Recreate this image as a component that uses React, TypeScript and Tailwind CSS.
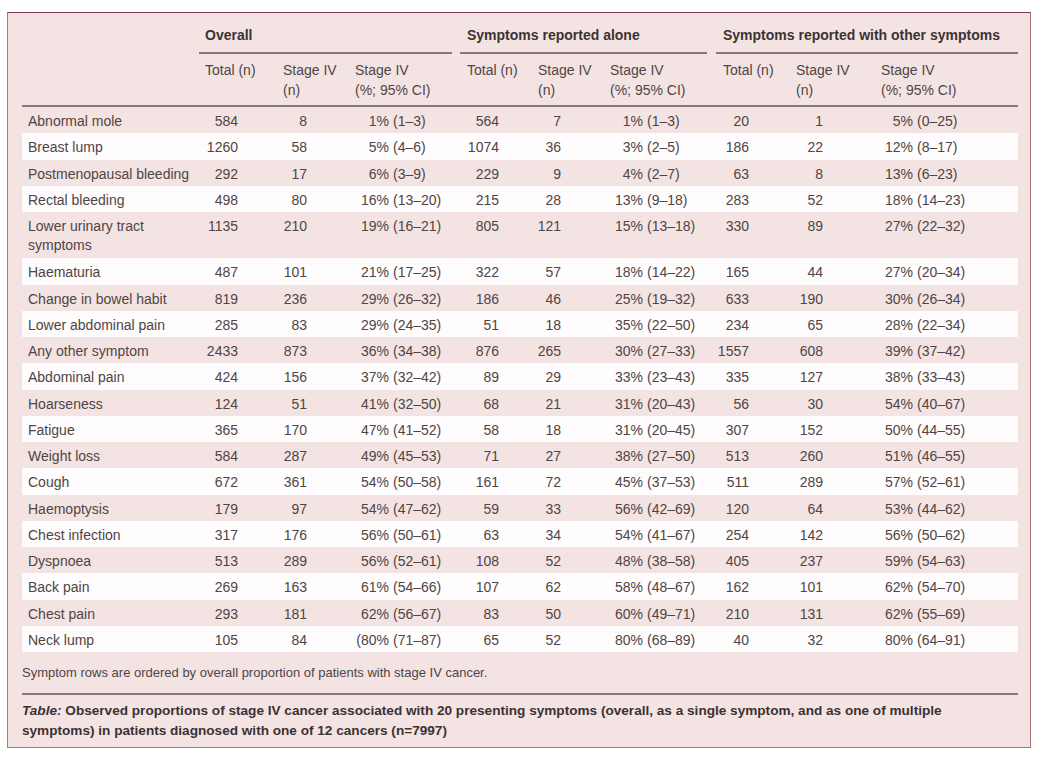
import React from "react";

type Row = [string, string, string, string, string, string, string, string, string, string, string, string, string];

const rows: Row[] = [
  ["Abnormal mole", "584", "8", "1%", "(1–3)", "564", "7", "1%", "(1–3)", "20", "1", "5%", "(0–25)"],
  ["Breast lump", "1260", "58", "5%", "(4–6)", "1074", "36", "3%", "(2–5)", "186", "22", "12%", "(8–17)"],
  ["Postmenopausal bleeding", "292", "17", "6%", "(3–9)", "229", "9", "4%", "(2–7)", "63", "8", "13%", "(6–23)"],
  ["Rectal bleeding", "498", "80", "16%", "(13–20)", "215", "28", "13%", "(9–18)", "283", "52", "18%", "(14–23)"],
  ["Lower urinary tract|symptoms", "1135", "210", "19%", "(16–21)", "805", "121", "15%", "(13–18)", "330", "89", "27%", "(22–32)"],
  ["Haematuria", "487", "101", "21%", "(17–25)", "322", "57", "18%", "(14–22)", "165", "44", "27%", "(20–34)"],
  ["Change in bowel habit", "819", "236", "29%", "(26–32)", "186", "46", "25%", "(19–32)", "633", "190", "30%", "(26–34)"],
  ["Lower abdominal pain", "285", "83", "29%", "(24–35)", "51", "18", "35%", "(22–50)", "234", "65", "28%", "(22–34)"],
  ["Any other symptom", "2433", "873", "36%", "(34–38)", "876", "265", "30%", "(27–33)", "1557", "608", "39%", "(37–42)"],
  ["Abdominal pain", "424", "156", "37%", "(32–42)", "89", "29", "33%", "(23–43)", "335", "127", "38%", "(33–43)"],
  ["Hoarseness", "124", "51", "41%", "(32–50)", "68", "21", "31%", "(20–43)", "56", "30", "54%", "(40–67)"],
  ["Fatigue", "365", "170", "47%", "(41–52)", "58", "18", "31%", "(20–45)", "307", "152", "50%", "(44–55)"],
  ["Weight loss", "584", "287", "49%", "(45–53)", "71", "27", "38%", "(27–50)", "513", "260", "51%", "(46–55)"],
  ["Cough", "672", "361", "54%", "(50–58)", "161", "72", "45%", "(37–53)", "511", "289", "57%", "(52–61)"],
  ["Haemoptysis", "179", "97", "54%", "(47–62)", "59", "33", "56%", "(42–69)", "120", "64", "53%", "(44–62)"],
  ["Chest infection", "317", "176", "56%", "(50–61)", "63", "34", "54%", "(41–67)", "254", "142", "56%", "(50–62)"],
  ["Dyspnoea", "513", "289", "56%", "(52–61)", "108", "52", "48%", "(38–58)", "405", "237", "59%", "(54–63)"],
  ["Back pain", "269", "163", "61%", "(54–66)", "107", "62", "58%", "(48–67)", "162", "101", "62%", "(54–70)"],
  ["Chest pain", "293", "181", "62%", "(56–67)", "83", "50", "60%", "(49–71)", "210", "131", "62%", "(55–69)"],
  ["Neck lump", "105", "84", "(80%", "(71–87)", "65", "52", "80%", "(68–89)", "40", "32", "80%", "(64–91)"],
];

const cols = "grid grid-cols-[177px_78px_72px_111px_72px_72px_112px_74px_85px_143px]";

function Pct({ pct, ci, w }: { pct: string; ci: string; w: string }) {
  return (
    <div className="flex">
      <span className={`${w} text-right`}>{pct}</span>
      <span className="pl-[4px]">{ci}</span>
    </div>
  );
}

export default function App() {
  return (
    <div className="w-[1048px] h-[775px] bg-white overflow-hidden font-['Liberation_Sans',Arial,sans-serif] text-[#4f4545]">
      <div className="ml-[7px] mt-[12px] w-[1024px] border border-[#b46f7e] border-t-[#7c3b49] bg-[#f4e3e3] pl-[14px] pr-[12px] pb-[6px]">
        {/* group headings */}
        <div className={`${cols} text-[14px] font-bold text-[#3b3232]`}>
          <div />
          <div className="col-span-3 mr-[8px] border-b-2 border-[#877777] pt-[12px] pb-[7px] pl-[6px] leading-[20px]">
            Overall
          </div>
          <div className="col-span-3 mr-[9px] border-b-2 border-[#877777] pt-[12px] pb-[7px] pl-[7px] leading-[20px]">
            Symptoms reported alone
          </div>
          <div className="col-span-3 border-b-2 border-[#877777] pt-[12px] pb-[7px] pl-[7px] leading-[20px]">
            Symptoms reported with other symptoms
          </div>
        </div>

        {/* column headings */}
        <div className={`${cols} border-b-2 border-[#877777] pt-[6px] pb-[5px] text-[14px] leading-[20px]`}>
          <div />
          <div className="pl-[6px]">Total (n)</div>
          <div className="pl-[6px]">Stage IV<br />(n)</div>
          <div className="pl-[6px]">Stage IV<br />(%; 95% CI)</div>
          <div className="pl-[7px]">Total (n)</div>
          <div className="pl-[6px]">Stage IV<br />(n)</div>
          <div className="pl-[6px]">Stage IV<br />(%; 95% CI)</div>
          <div className="pl-[7px]">Total (n)</div>
          <div className="pl-[6px]">Stage IV<br />(n)</div>
          <div className="pl-[6px]">Stage IV<br />(%; 95% CI)</div>
        </div>

        {/* body */}
        <div className="text-[14px] leading-[19px]">
          {rows.map((r, i) => {
            const lines = r[0].split("|");
            return (
              <div
                key={r[0]}
                className={`${cols} pt-[5px] ${lines.length > 1 ? "h-[46.25px]" : "h-[26.25px]"} ${i % 2 === 1 ? "bg-[#fefcfc]" : ""}`}
              >
                <div className="pl-[6px]">
                  {lines.map((l, j) => (
                    <div key={j}>{l}</div>
                  ))}
                </div>
                <div className="text-right pr-[39px]">{r[1]}</div>
                <div className="text-right pr-[42px]">{r[2]}</div>
                <Pct pct={r[3]} ci={r[4]} w="w-[40px]" />
                <div className="text-right pr-[33px]">{r[5]}</div>
                <div className="text-right pr-[43px]">{r[6]}</div>
                <Pct pct={r[7]} ci={r[8]} w="w-[39px]" />
                <div className="text-right pr-[41px]">{r[9]}</div>
                <div className="text-right pr-[52px]">{r[10]}</div>
                <Pct pct={r[11]} ci={r[12]} w="w-[38px]" />
              </div>
            );
          })}
        </div>

        {/* footnote */}
        <p className="mt-[13px] pb-[12px] border-b-2 border-[#877777] text-[13px] leading-[16px]">
          Symptom rows are ordered by overall proportion of patients with stage IV cancer.
        </p>

        {/* caption */}
        <p className="pt-[6px] text-[13.6px] leading-[20px] font-bold text-[#3b3232]">
          <i>Table:</i> Observed proportions of stage IV cancer associated with 20 presenting symptoms (overall, as a single symptom, and as one of multiple
          <br />
          symptoms) in patients diagnosed with one of 12 cancers (n=7997)
        </p>
      </div>
    </div>
  );
}
